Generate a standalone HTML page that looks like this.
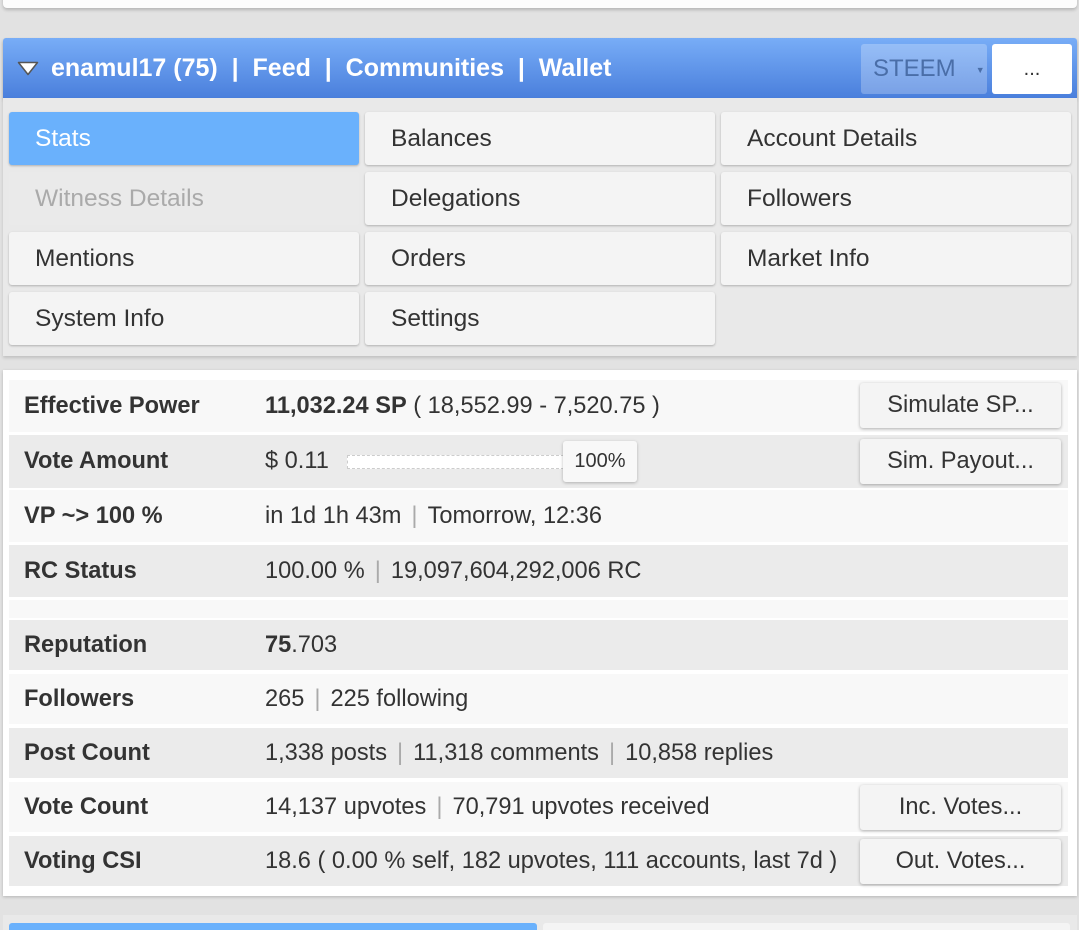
<!DOCTYPE html><html><head><style>
body{margin:0;width:1079px;height:930px;background:#e2e2e2;font-family:"Liberation Sans","DejaVu Sans",sans-serif;position:relative;overflow:hidden;color:#333}
div{position:absolute;box-sizing:border-box}
.top{left:3px;top:-10px;width:1074px;height:18px;background:#fcfcfc;border-radius:4px;box-shadow:0 2px 3px rgba(0,0,0,.2)}
.hdr{left:3px;top:38px;width:1074px;height:60px;background:linear-gradient(#78adf7,#4a7fdc);border-radius:3px 3px 0 0;color:#fff;font-size:25px;font-weight:bold;line-height:60px;padding-left:48px;box-shadow:0 2px 3px rgba(0,0,0,.3);white-space:nowrap}
.panel{left:3px;top:98px;width:1074px;height:258px;background:#e9e9e9;box-shadow:0 2px 3px rgba(0,0,0,.15)}
.b{height:53px;background:#f4f4f4;border-radius:3px;box-shadow:0 1px 2px rgba(0,0,0,.25);font-size:24.5px;line-height:53px;padding-left:26px;color:#333}
.tbl{left:3px;top:370px;width:1074px;height:526px;background:#fff;box-shadow:0 1px 3px rgba(0,0,0,.2)}
.r{left:9px;width:1059px;font-size:23.6px}
.r .l{left:0;top:0;bottom:0;width:238px;padding-left:15px;font-weight:bold;display:flex;align-items:center;white-space:nowrap}
.r .v{left:241px;top:0;bottom:0;right:0;padding-left:15px;display:flex;align-items:center;white-space:nowrap}
.a{background:#f8f8f8}.g{background:#ebebeb}
.sb{left:860px;width:201px;height:45px;background:#f4f4f4;border-radius:3px;box-shadow:0 1px 3px rgba(0,0,0,.3);font-size:23.6px;text-align:center;line-height:45px;white-space:nowrap}
.s{color:#aaa;margin:0 10px}
</style></head><body>
<div class="top"></div>
<div class="hdr"><svg style="position:absolute;left:14px;top:23px" width="22" height="15" viewBox="0 0 22 15"><path d="M1.5 1.5H20.5L11 13.5Z" fill="#fff" stroke="#555" stroke-width="1.5" stroke-linejoin="round"/></svg>enamul17 (75) &nbsp;| &nbsp;Feed &nbsp;| &nbsp;Communities &nbsp;| &nbsp;Wallet</div>
<div style="left:861px;top:44px;width:126px;height:50px;background:rgba(255,255,255,.25);border-radius:3px;color:#4a6ea8;font-size:24px;line-height:50px;padding-left:12px">STEEM<span style="font-size:9px;margin-left:20px;vertical-align:middle">▼</span></div>
<div style="left:992px;top:44px;width:80px;height:50px;background:#fff;border-radius:3px;text-align:center;line-height:50px;font-size:20px">...</div>
<div class="panel"></div>
<div class="b" style="left:9px;top:112px;width:350px;background:#6ab1fc;color:#fff">Stats</div>
<div class="b" style="left:365px;top:112px;width:350px">Balances</div>
<div class="b" style="left:721px;top:112px;width:350px">Account Details</div>
<div class="b" style="left:9px;top:172px;width:350px;background:#eaeaea;color:#aaa;box-shadow:none">Witness Details</div>
<div class="b" style="left:365px;top:172px;width:350px">Delegations</div>
<div class="b" style="left:721px;top:172px;width:350px">Followers</div>
<div class="b" style="left:9px;top:232px;width:350px">Mentions</div>
<div class="b" style="left:365px;top:232px;width:350px">Orders</div>
<div class="b" style="left:721px;top:232px;width:350px">Market Info</div>
<div class="b" style="left:9px;top:292px;width:350px">System Info</div>
<div class="b" style="left:365px;top:292px;width:350px">Settings</div>
<div class="tbl"></div>
<div class="r a" style="top:380px;height:52px"><div class="l a">Effective Power</div><div class="v a"><b>11,032.24 SP</b>&nbsp;( 18,552.99 - 7,520.75 )</div></div>
<div class="r g" style="top:435px;height:53px"><div class="l g">Vote Amount</div><div class="v g">$ 0.11<span style="display:inline-block;width:215px;height:12px;border:1px dashed #ccc;background:#fff;margin-left:18px"></span></div></div>
<div style="left:563px;top:441px;width:74px;height:41px;background:#f8f8f8;border-radius:3px;box-shadow:0 1px 3px rgba(0,0,0,.25);font-size:20px;text-align:center;line-height:41px">100%</div>
<div class="r a" style="top:490px;height:52px"><div class="l a">VP ~&gt; 100 %</div><div class="v a">in 1d 1h 43m<span class="s">|</span>Tomorrow, 12:36</div></div>
<div class="r g" style="top:545px;height:52px"><div class="l g">RC Status</div><div class="v g">100.00 %<span class="s">|</span>19,097,604,292,006 RC</div></div>
<div class="r a" style="top:600px;height:18px"><div class="l a"></div><div class="v a"></div></div>
<div class="r g" style="top:620px;height:50px"><div class="l g">Reputation</div><div class="v g"><b>75</b>.703</div></div>
<div class="r a" style="top:674px;height:50px"><div class="l a">Followers</div><div class="v a">265<span class="s">|</span>225 following</div></div>
<div class="r g" style="top:728px;height:50px"><div class="l g">Post Count</div><div class="v g">1,338 posts<span class="s">|</span>11,318 comments<span class="s">|</span>10,858 replies</div></div>
<div class="r a" style="top:782px;height:50px"><div class="l a">Vote Count</div><div class="v a">14,137 upvotes<span class="s">|</span>70,791 upvotes received</div></div>
<div class="r g" style="top:836px;height:50px"><div class="l g">Voting CSI</div><div class="v g">18.6 ( 0.00 % self, 182 upvotes, 111 accounts, last 7d )</div></div>
<div class="sb" style="top:383px">Simulate SP...</div>
<div class="sb" style="top:439px">Sim. Payout...</div>
<div class="sb" style="top:785px">Inc. Votes...</div>
<div class="sb" style="top:839px">Out. Votes...</div>
<div style="left:3px;top:915px;width:1074px;height:15px;background:#e9e9e9"></div>
<div style="left:9px;top:923px;width:528px;height:7px;background:#6ab1fc;border-radius:3px 3px 0 0"></div>
<div style="left:543px;top:923px;width:527px;height:7px;background:#f4f4f4;border-radius:3px 3px 0 0"></div>
</body></html>
